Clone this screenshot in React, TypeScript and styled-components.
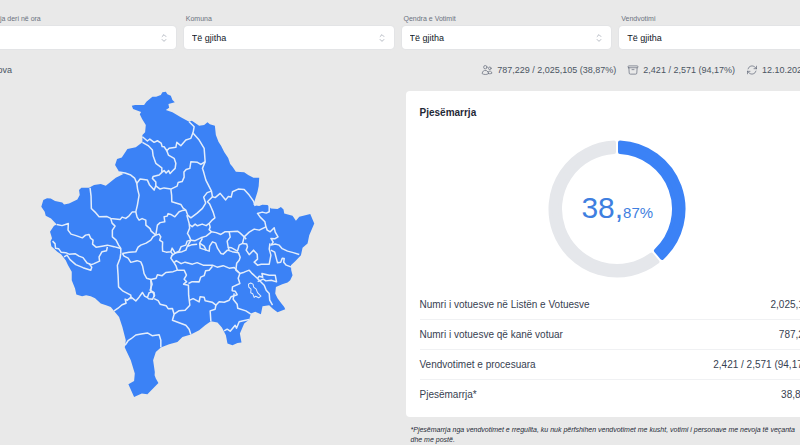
import React from "react";
import styled, { createGlobalStyle } from "styled-components";
import {
  HiOutlineArchiveBox,
  HiOutlineArrowPath,
  HiOutlineChevronUpDown,
  HiOutlineHome,
  HiOutlineUsers,
} from "react-icons/hi2";

const GlobalStyle = createGlobalStyle`
  *, *::before, *::after { box-sizing: border-box; }
  body {
    margin: 0;
    background: #e9e9e9;
    color: #374151;
    font-family: "Liberation Sans", Arial, sans-serif;
  }
`;

const Page = styled.div`
  min-height: 100vh;
  overflow: hidden;
`;

/* The dashboard bleeds past both sides of the window. */
const Shell = styled.main`
  margin: 0 -29px 0 -34px;
  padding-top: 14px;
`;

const Filters = styled.form`
  display: grid;
  grid-template-columns: repeat(4, minmax(0, 1fr));
  gap: 8px;
`;

const Field = styled.div`
  display: flex;
  flex-direction: column;
  gap: 2px;
`;

const FieldLabel = styled.label`
  padding: 0 2px;
  font-size: 7px;
  line-height: 10px;
  color: #6b7280;
`;

const SelectBox = styled.div`
  display: grid;
  align-items: center;

  & > * {
    grid-area: 1 / 1;
  }

  & > svg {
    justify-self: end;
    margin-right: 6px;
    color: #9ca3af;
    pointer-events: none;
  }
`;

const Select = styled.select`
  appearance: none;
  width: 100%;
  height: 23px;
  padding: 0 20px 0 8px;
  border: 0;
  border-radius: 4px;
  background: #fff;
  box-shadow: 0 0 1px 1px #e3e4e6;
  color: #111827;
  font: 9px/16px "Liberation Sans", Arial, sans-serif;
`;

const SummaryBar = styled.div`
  display: flex;
  align-items: center;
  justify-content: space-between;
  padding: 13px 2px 13px 0;
`;

const Stats = styled.div`
  display: flex;
  gap: 11px;
`;

const Stat = styled.span`
  display: flex;
  align-items: center;
  gap: 4px;
  font-size: 9px;
  line-height: 16px;
  white-space: nowrap;
  color: #4b5563;

  & > svg {
    color: #6b7280;
  }
`;

const Columns = styled.div`
  display: grid;
  grid-template-columns: repeat(2, minmax(0, 1fr));
  gap: 16px;
`;

const MapPanel = styled.section`
  display: flex;
  justify-content: center;
  align-items: flex-start;
`;

const MapSvg = styled.svg`
  width: 65%;
  height: auto;
`;

const Card = styled.section`
  padding: 14px 14px 8px;
  border-radius: 4px;
  background: #fff;
`;

const CardTitle = styled.h2`
  margin: 0 0 19px;
  font-size: 10px;
  line-height: 16px;
  font-weight: 700;
  color: #1f2937;
`;

const Gauge = styled.div`
  display: grid;
  place-items: center;
  margin-bottom: 11px;

  & > * {
    grid-area: 1 / 1;
  }
`;

const GaugeValue = styled.strong`
  padding-top: 3px;
  font-size: 30px;
  line-height: 34px;
  font-weight: 400;
  color: #3f7fe0;
`;

const GaugeDecimals = styled.span`
  font-size: 15px;
`;

const Table = styled.table`
  width: 100%;
  border-collapse: collapse;
  font-size: 10px;
  line-height: 14px;
  color: #374151;

  th,
  td {
    height: 30px;
    padding: 2px 0 0;
    font-weight: 400;
  }

  th {
    text-align: left;
  }

  td {
    text-align: right;
    white-space: nowrap;
  }

  tr + tr > * {
    border-top: 1px solid #f0f1f3;
  }
`;

const Footnote = styled.p`
  margin: 8px 0 0;
  padding: 0 24px 0 5px;
  font-size: 7px;
  line-height: 10px;
  font-style: italic;
  color: #1f2937;
`;

const COUNTRY =
  "M132.7 105.7 136 105 145 105 147.3 101.7 153.3 96.7 157 96.8 161.7 95 163.3 92.3 166.7 91.7 168.3 94.3 171.7 95.7 173.3 100 175.7 102.3 169.3 104 170 107.7 166.7 110 173.3 112.3 181.7 117.3 190 121.7 192.7 120.7 200 125.7 205 125 208.3 122.3 210.7 124.3 215.7 125.7 216.7 135 219.3 141.7 222 146 225 152 229 158 231 164 233.3 166.7 236.7 171.7 245 172.3 249 175 254.3 177.7 260 177.7 259.5 186 258.3 191.7 255.7 200 254.3 205 260 206 263 204.7 268.3 205 271.7 208.3 278.3 209 281.7 207 284.3 209.3 285 213.3 293.3 215.7 296.7 220.7 300 216.7 311 214 315 223.3 310 235 308.3 243.3 303.3 247.5 301.7 255 296 261 291.7 265 292 270 293.3 275 291 280 288.3 282.3 283 284 276.7 286.7 276 293.3 278.3 298 282 303 285 306.7 286 309 278.3 312 273.3 308.3 270 305 263.3 306 261.7 314 256 311.5 251.7 313.3 250 319.3 245 323.3 240.7 333.3 242.3 342.3 238.3 342.7 233.3 345 228.3 343.3 226.7 335 222.7 327.3 218.3 322.3 211.7 321 206 325 200 330 191.7 334.3 183.3 336.7 178.3 341.7 170 344 161.7 347.3 156.7 351.7 154 360 155.7 371.7 155.5 375 156.7 378.3 159.3 382.7 148.3 394 142.7 393.3 135 396.7 129.3 384 135 380.7 135.7 373.3 131.7 360 125.7 347.3 126.7 340 123.3 326.7 120 316.7 115 310.7 111.7 306.7 107 305 101.7 303.3 96 298 91.7 296 87 295 83 296 77.3 294.3 76 288.3 72.7 280 72.7 271.7 69 265 66.7 260 62 254 58.3 251.7 52.3 246 51.5 241 53 238 51 231.7 55 225.7 57.7 224.3 52 218.5 46.7 215.7 45.7 211.7 42.3 206.7 44.3 200 48 198.2 51.7 198.3 56 201 63.3 202.3 65 204.5 70 203.3 78.3 199.3 80.7 195 80 190 82.3 187.7 90 187.7 95 185 101.7 184 106.7 185.7 116.7 177.7 124.3 174 120 171.7 116 165 118 159 122.7 157.5 128.3 149 136.7 147.3 143.3 142.3 143.3 135 146 132.3 146.7 125 143 119 140.7 114.3 142 112 134 109Z";

const LAKE =
  "M249.3 284 251.5 282.8 253.8 284 254.5 287 257 289 258.3 292.5 261.7 296 259.5 297.6 256.5 296 255 297.3 253.5 293.5 251.5 292.5 251.8 289 249.6 287Z";

const BORDERS = [
  "M143.3 136.7 148.3 141 150.7 139 155 142.3 158.3 140.7 162 143 163 146.5 165 146.7 167.7 150.7 170 148.3 176.7 147.3 177.7 142.3 181.7 145.7 186.7 140 191.7 138.3 194 132.3 195 126.7 190 121.7",
  "M143.3 142.3 149 145.5 153.3 150 154 155.7 156.7 163.3 162.7 167.7 162.7 172.3 165 170.5 167 173 169.5 170.5 171 173.5 173.3 171 176 168.3 176.7 163.3 175 158.3 169.3 155 167.7 150.7",
  "M194 133.3 200 140 205 148.3 206 161.7 203.3 168.3 204.5 172 206.7 180 212.3 191 213.3 196.7",
  "M206 161.7 201.7 164.3 198.3 162.3 191.7 161.7 190.7 168.3 187 169.5 184.8 172 185 177 183 181.5 179 182.5 178 186 171.7 189",
  "M162.7 172.3 160 175 154 176.5 153.3 178.3 156.7 182 156.7 185.7 161 189 165 187.8 171.7 189",
  "M120 172 126 173 131.7 175 135.5 178 137.7 183.3 141 179 148.3 180 150.5 185 155 190 156.7 185.7",
  "M137.7 183.3 138.5 189 140 195 138.3 205 136.7 211.7 133 212 130 215.7 126.7 218.3 123 217 121 219.5 111.7 218.3 108 216.5 100 216.7 96 212 92.3 208.3 92 196 91 187.7",
  "M136.7 211.7 138 217 140 220 143 218.5 146.7 220 146.8 225 151 228.5 152 231 156.7 235",
  "M171.7 189 172.5 195 172.7 201.7 181.7 204.3 184 208 186.7 210 188.5 215 191.7 217.7 198 213 203.3 208.3 206.5 203 204.5 197 208 192.5 212.3 191",
  "M186.7 210 183 210.5 180 211.7 175.7 216.7 171.7 214.3 169 213.5 168 216 165 216.7 165.7 221.7 161 222.5 158.3 225 157.5 230 156.7 235",
  "M156.7 235 160 234 161.7 236.7 160.5 240 163.5 242 163.3 246.7 163.5 251 167 252 171.7 251.7 173 248 176 253 180 251 182 246.5 186.7 245 188 241 191.7 240 190 236 188.3 233.3 190.5 228 190 223.3 187.7 215",
  "M190 224.3 193 226.5 196 224 198.3 225.7 203 224 207 225.5 210 223.3 213 220 215.7 217.7 214 212 211.7 206.7 210.5 204 208.3 201.7 213.3 196.7 216 197.5 221 193.3 224 197 226.5 199.8 229 196.5 232 197 233.3 191.7 239 189 245 189.3 250 195 254.3 201 256 206",
  "M210 223.3 211 227 210 229.5 212.3 231.7 217 232.5 221.7 234.3 226 231.5 230 231.7 238.3 231 241 233 245 236.7 250 232 255 229 260 230 266.7 226.7 265.7 221.7 261 217 258.3 213.3 263 212 267 213 270 211.7 270 205.7",
  "M266.7 226.7 268 230 271 231.7 275 227.7 276 232 278.8 236.7 275.5 238.7 271.7 238.3 274 242 271.7 245 276 243.8 280 245 283 248.5 288.3 251 294 252.5 300 254.3",
  "M230 231.7 231 237 228 241 229 247 232 247.5 238.3 251 240 245 243.3 243.3 245 236.7",
  "M243.3 243.3 247.5 243.8 248.3 246.7 247 250 250 254.5 254.3 250 258 254 258.3 259 255 262 258.3 265 262 264.2 270 264 271.7 255 270 249 270.7 243.3",
  "M191.7 240 196 240.5 201.7 237.7 207 236 212.3 231.7 M203.3 238.3 200.5 243 205 246 207 250 210 251 210.5 246 213.3 241.7 216.5 243 218.3 248 221.7 253.3 224 254 228.3 250 233 251.5 239.3 252.7 241 257 240 260 237.5 263 236.7 270 240.7 273.3",
  "M229 247 230 250.5 M245 236.7 247 239",
  "M175 262.7 177 260.5 182 263.5 186 262 193.3 264 198 262.5 204 265 213.3 265 218 267 224 265.5 230 268 235 267.3 240.7 273.3",
  "M171.7 251.7 173.5 254 171.7 258 175 262.7 M172 256 176.7 252.5 183 251.5 186.7 250 188 246.5 193 244.5 198 244 M200.5 243 201 248 207 250 M188 246.5 191.7 240",
  "M175 262.7 177 266 178.3 270 174 271.5 166.7 272.3 163 275.5 158.3 274.5 157 278 151.7 279.3 153 284 151 290 155 292.5 155 296.7",
  "M178.3 270 185 270 187.3 275 185 279 187.5 281.5 184.5 284 189.3 285 189.5 295 190.7 305 186 310 180 310.5 175 314",
  "M189.3 283.3 193 281.5 200 281.7 201.5 277 205 275.5 206.5 270.5 210 270 213.3 266",
  "M155 298.5 159 300.5 161 304 167 305.5 169 308.5 173.3 308.3 175 314 173.3 320 180 322.5 186.7 325 190 329 191.7 334.3",
  "M190.7 300 194 298.5 200 301.7 201 296.5 205 297 206 300.5 213 302 216.7 305 220 301.5 225 302 230 300 232 296.5 238 294.5 236 291 233 290.5 233.3 286.7 240.7 283.3 239 278 240.7 273.3",
  "M216.7 305 216 309 211 310.7 211.7 321",
  "M235 293.3 234 299 238 304 238.5 308 246.7 310.7 251.7 314",
  "M225 330.7 228 329 231 331 233.3 328.3 236 325 237.3 328 240 321.5 244 320.5 250 319.3",
  "M240.7 273.3 245 272 250 270 253 273.5 258.3 278.3 262 282 265 285 267 290 270 293.3 270.5 300 273.3 305",
  "M258.3 278.3 260 276 263.5 277 262.7 273.3 270 275 276 275 277.3 281.7 272 280 266.7 280.7 264 279 258.5 281.5",
  "M271.7 250 275.5 252 276.7 256.7 278.3 262.7 281.5 262 283 258 285 258.3 284.5 262 287 265 292.3 267",
  "M115 310.7 119 308 123 304.5 127 303 126 299 128.3 300 132 297 136.7 300.7 140 297 143.3 292.3 145.5 296 148.3 297.3 150 292.5 153.3 291.7 155.5 295 153.5 299 149.5 298.5 148.3 297.3",
  "M151.7 291.7 152 285 151.7 279.3 147.5 278 145 273.5 143.5 266 141.7 261.7 138 260.5 131.7 262.2 129 258 125 256 123.3 253.3",
  "M121.7 253.3 121 258 118.3 265 119 275 119.5 286.7 124 291 131.7 295 132 299",
  "M123.3 253.3 130 252 136.7 251.7 139 247 141.7 245 147 243 151.7 240 154 236.5 156.7 235",
  "M111.7 218.3 113 223 116 226 113.3 230 113.3 236.7 117 240 119.5 245 121.7 248.3 121.7 253.3",
  "M57.7 224.3 63 225.5 69.3 223.3 69 230 72 234 77 235.5 83.3 237.7 86.5 235 90 234.3 91.5 238 94 240 93.5 244 97 247 103 246 108.3 245 115 246.5 121.7 248.3",
  "M108.3 246.7 107.5 250.5 103 251.5 100 256.7 100.5 261 95 263.5 92.5 264.5 88 262.8 84 257.5 80 256 76 253.5 70 254 66.7 252.5 62 252 59.5 248.5 56.5 248 56 243.5 53.5 241",
  "M65 256.7 68 255 71 259.5 76.7 264.5 84 267.5 91.7 270 92.7 267 90 263.5",
  "M126 345 129 340.5 132 338.5 136.7 334.8 142 333.8 148.3 332.7 153 335.5 160 334.5 161.7 340 161.7 347",
];

const CENTER = 69;
const STROKE = 4;
const OUTER = 66.5;
const INNER = 57;
const EDGE_INSET = 3;

/* A ring segment between two fractions of the circle, with parallel end gaps. */
function segmentPath(from: number, to: number): string {
  const point = (fraction: number, radius: number, side: number) => {
    const angle = fraction * 2 * Math.PI + side * Math.asin(EDGE_INSET / radius);
    return `${CENTER + radius * Math.sin(angle)} ${CENTER - radius * Math.cos(angle)}`;
  };
  const large = to - from > 0.5 ? 1 : 0;
  return [
    `M${point(from, OUTER, 1)}`,
    `A${OUTER} ${OUTER} 0 ${large} 1 ${point(to, OUTER, -1)}`,
    `L${point(to, INNER, -1)}`,
    `A${INNER} ${INNER} 0 ${large} 0 ${point(from, INNER, 1)}Z`,
  ].join(" ");
}

const segments = [
  { from: 0, to: 0.3887, color: "#3b82f6" },
  { from: 0.3887, to: 1, color: "#e5e7eb" },
];

const filters = [
  { id: "hour", label: "Pjesëmarrja deri në ora", value: "19:00" },
  { id: "municipality", label: "Komuna", value: "Të gjitha" },
  { id: "center", label: "Qendra e Votimit", value: "Të gjitha" },
  { id: "station", label: "Vendvotimi", value: "Të gjitha" },
];

const rows = [
  { label: "Numri i votuesve në Listën e Votuesve", value: "2,025,105" },
  { label: "Numri i votuesve që kanë votuar", value: "787,229" },
  { label: "Vendvotimet e procesuara", value: "2,421 / 2,571 (94,17%)" },
  { label: "Pjesëmarrja*", value: "38,87%" },
];

function KosovoMap() {
  return (
    <MapSvg viewBox="41 91 275 307" role="img" aria-label="Harta e Kosovës">
      <path d={COUNTRY} fill="#3b82f6" />
      <g fill="none" stroke="#e3edfb" strokeWidth="1.5" strokeLinejoin="round">
        {BORDERS.map((d) => (
          <path key={d} d={d} />
        ))}
        <path d={LAKE} strokeWidth="1" />
      </g>
    </MapSvg>
  );
}

export default function App() {
  return (
    <Page>
      <GlobalStyle />
      <Shell>
        <Filters>
          {filters.map((f) => (
            <Field key={f.id}>
              <FieldLabel htmlFor={f.id}>{f.label}</FieldLabel>
              <SelectBox>
                <Select id={f.id} defaultValue={f.value}>
                  <option>{f.value}</option>
                </Select>
                <HiOutlineChevronUpDown size={12} aria-hidden />
              </SelectBox>
            </Field>
          ))}
        </Filters>

        <SummaryBar>
          <Stat>
            <HiOutlineHome size={12} aria-hidden />
            Kosova
          </Stat>
          <Stats>
            <Stat>
              <HiOutlineUsers size={12} aria-hidden />
              787,229 / 2,025,105 (38,87%)
            </Stat>
            <Stat>
              <HiOutlineArchiveBox size={12} aria-hidden />
              2,421 / 2,571 (94,17%)
            </Stat>
            <Stat>
              <HiOutlineArrowPath size={12} aria-hidden />
              12.10.2025 9:30
            </Stat>
          </Stats>
        </SummaryBar>

        <Columns>
          <MapPanel>
            <KosovoMap />
          </MapPanel>
          <div>
            <Card>
              <CardTitle>Pjesëmarrja</CardTitle>
              <Gauge>
                <svg width="138" height="138" viewBox="0 0 138 138" aria-hidden>
                  {segments.map((s) => (
                    <path
                      key={s.color}
                      d={segmentPath(s.from, s.to)}
                      fill={s.color}
                      stroke={s.color}
                      strokeWidth={STROKE}
                      strokeLinejoin="round"
                    />
                  ))}
                </svg>
                <GaugeValue>
                  38,<GaugeDecimals>87%</GaugeDecimals>
                </GaugeValue>
              </Gauge>
              <Table>
                <tbody>
                  {rows.map((r) => (
                    <tr key={r.label}>
                      <th scope="row">{r.label}</th>
                      <td>{r.value}</td>
                    </tr>
                  ))}
                </tbody>
              </Table>
            </Card>
            <Footnote>
              *Pjesëmarrja nga vendvotimet e rregullta, ku nuk përfshihen vendvotimet me kusht, votimi i
              personave me nevoja të veçanta dhe me postë.
            </Footnote>
          </div>
        </Columns>
      </Shell>
    </Page>
  );
}
